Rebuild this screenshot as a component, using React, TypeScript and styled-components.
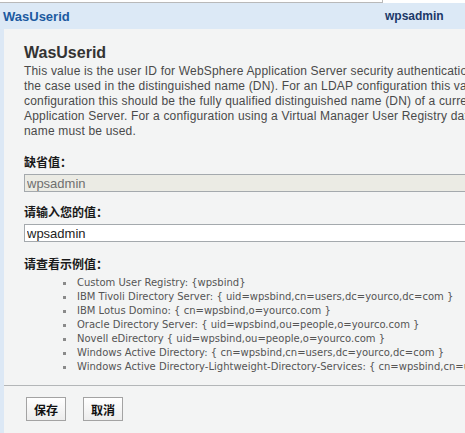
import React from "react";
import styled, { createGlobalStyle } from "styled-components";

const Global = createGlobalStyle`
  html, body {
    margin: 0;
    padding: 0;
    background: #ffffff;
    overflow: hidden;
    width: 465px;
    height: 433px;
  }
  #root {
    width: 465px;
    overflow: hidden;
  }
`;

const Page = styled.div`
  width: 465px;
  height: 433px;
  overflow: hidden;
  font-family: "Liberation Sans", Arial, "Noto Sans CJK SC", sans-serif;
`;

const TopStrip = styled.div`
  height: 3px;
  display: flex;
`;

const TopCell = styled.div`
  width: 382px;
  height: 2px;
  border-bottom: 1px solid #b9b9b9;
  border-right: 1px solid #b9b9b9;
`;

const Header = styled.div`
  display: flex;
  align-items: center;
  height: 26px;
  background: #dce9f6;
  width: 800px;
`;

const HeaderTitle = styled.div`
  width: 379px;
  padding-left: 3px;
  font-size: 13px;
  font-weight: bold;
  color: #1b5aa0;
`;

const HeaderValue = styled.div`
  padding-left: 3px;
  font-size: 12px;
  font-weight: bold;
  color: #1b3868;
`;

const Frame = styled.div`
  background: #dce8f5;
  padding-left: 4px;
  width: 800px;
`;

const Panel = styled.div`
  background: #f3f4f4;
  padding: 14px 0 11px 20px;
`;

const Title = styled.h1`
  margin: 0;
  font-size: 16px;
  line-height: 20px;
  font-weight: bold;
  color: #333333;
`;

const Description = styled.div`
  margin-top: 1px;
  font-size: 12px;
  line-height: 15px;
  letter-spacing: 0.18px;
  color: #4a4a4a;
`;

const DescLine = styled.div`
  white-space: nowrap;
`;

const Label = styled.div<{ $gap: number }>`
  margin-top: ${(p) => p.$gap}px;
  margin-bottom: 4px;
  font-family: "Noto Sans CJK SC", sans-serif;
  font-size: 12px;
  line-height: 16px;
  font-weight: bold;
  color: #1a1a1a;
`;

const Field = styled.input<{ $disabled?: boolean }>`
  display: block;
  box-sizing: border-box;
  width: 700px;
  height: 18px;
  margin: 0;
  padding: 0 2px;
  border: 1px solid #a4a9ad;
  border-radius: 0;
  font-family: "Liberation Sans", Arial, sans-serif;
  font-size: 13px;
  line-height: 16px;
  outline: none;
  background: ${(p) => (p.$disabled ? "#ebebe4" : "#ffffff")};
  color: ${(p) => (p.$disabled ? "#6f6f6f" : "#222222")};
  &:disabled {
    color: #6f6f6f;
  }
`;

const Examples = styled.ul`
  margin: 1px 0 0 0;
  padding: 0 0 0 39px;
  list-style: none;
`;

const Example = styled.li`
  position: relative;
  padding-left: 14px;
  white-space: nowrap;
  font-family: "DejaVu Sans", Verdana, sans-serif;
  font-size: 10px;
  letter-spacing: 0;
  line-height: 14px;
  color: #555555;
  &::before {
    content: "";
    position: absolute;
    left: 0;
    top: 6px;
    width: 3px;
    height: 3px;
    background: #8a8a8a;
  }
`;

const Footer = styled.div`
  border-top: 1px solid #b3b6b8;
  background: #f3f4f4;
  height: 60px;
  display: flex;
  align-items: flex-start;
  gap: 17px;
  padding: 11px 0 0 22px;
  box-sizing: border-box;
`;

const Button = styled.button`
  width: 40px;
  height: 24px;
  margin: 0;
  padding: 0;
  border: 1px solid #a3a3a3;
  border-radius: 0;
  background: linear-gradient(#ffffff, #ececec);
  font-family: "Noto Sans CJK SC", sans-serif;
  font-size: 12px;
  font-weight: bold;
  color: #111111;
`;

const descLines = [
  "This value is the user ID for WebSphere Application Server security authentication. It should match",
  "the case used in the distinguished name (DN). For an LDAP configuration this value should be the short name. For a Custom User Registry",
  "configuration this should be the fully qualified distinguished name (DN) of a currently existing user for WebSphere",
  "Application Server. For a configuration using a Virtual Manager User Registry database the full distinguished",
  "name must be used.",
];

const examples = [
  "Custom User Registry: {wpsbind}",
  "IBM Tivoli Directory Server: { uid=wpsbind,cn=users,dc=yourco,dc=com }",
  "IBM Lotus Domino: { cn=wpsbind,o=yourco.com }",
  "Oracle Directory Server: { uid=wpsbind,ou=people,o=yourco.com }",
  "Novell eDirectory { uid=wpsbind,ou=people,o=yourco.com }",
  "Windows Active Directory: { cn=wpsbind,cn=users,dc=yourco,dc=com }",
  "Windows Active Directory-Lightweight-Directory-Services: { cn=wpsbind,cn=users,dc=yourco,dc=com }",
];

export default function App() {
  return (
    <Page>
      <Global />
      <TopStrip>
        <TopCell />
      </TopStrip>
      <Header>
        <HeaderTitle>WasUserid</HeaderTitle>
        <HeaderValue>wpsadmin</HeaderValue>
      </Header>
      <Frame>
        <Panel>
          <Title>WasUserid</Title>
          <Description>
            {descLines.map((l, i) => (
              <DescLine key={i}>{l}</DescLine>
            ))}
          </Description>
          <Label $gap={15}>缺省值：</Label>
          <Field $disabled disabled value="wpsadmin" readOnly />
          <Label $gap={12}>请输入您的值：</Label>
          <Field defaultValue="wpsadmin" />
          <Label $gap={14}>请查看示例值：</Label>
          <Examples>
            {examples.map((e, i) => (
              <Example key={i}>{e}</Example>
            ))}
          </Examples>
        </Panel>
        <Footer>
          <Button>保存</Button>
          <Button>取消</Button>
        </Footer>
      </Frame>
    </Page>
  );
}
